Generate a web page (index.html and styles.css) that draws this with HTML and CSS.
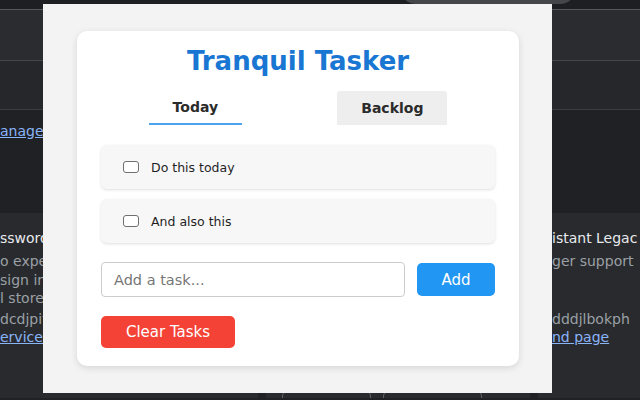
FILE: index.html
```html
<!DOCTYPE html>
<html>
<head>
<meta charset="utf-8">
<link rel="stylesheet" href="styles.css">
</head>
<body>
<div class="page">
  <div class="topstrip"><div class="search"></div></div>
  <div class="toolbar"></div>
  <div class="subbar"></div>
  <div class="notice"><a class="link">anage extensions</a></div>
  <div class="cards">
    <div class="ext">
      <div class="ext-name">ssword Manager</div>
      <div class="ext-desc">o expedite your<br>sign in across<br>l stored</div>
      <div class="ext-id">dcdjpifgh</div>
      <a class="link">ervice worker</a>
    </div>
    <div class="ext">
      <div class="ext-name">Tranquil Tasker</div>
      <div class="ext-desc">A calm task list</div>
      <div class="ext-id">ID: abcdefghijk</div>
      <a class="link">Inspect views</a>
      <div class="ext-buttons">
        <div class="ext-btn wide1"></div>
        <div class="ext-btn wide2"></div>
      </div>
    </div>
    <div class="ext">
      <div class="ext-name">istant Legac</div>
      <div class="ext-desc">ger support</div>
      <div class="ext-id">dddjlbokph</div>
      <a class="link">nd page</a>
    </div>
  </div>
</div>

<div class="popup">
  <div class="card">
    <h1 class="title">Tranquil Tasker</h1>
    <div class="tabs">
      <div class="tab active">Today</div>
      <div class="tab inactive">Backlog</div>
    </div>
    <div class="tasks">
      <div class="task"><span class="check"></span><span class="task-text">Do this today</span></div>
      <div class="task"><span class="check"></span><span class="task-text">And also this</span></div>
    </div>
    <div class="add-row">
      <div class="input"><span class="placeholder">Add a task...</span></div>
      <div class="btn add">Add</div>
    </div>
    <div class="btn clear">Clear Tasks</div>
  </div>
</div>
</body>
</html>
```
FILE: styles.css
```css
* { box-sizing: border-box; }
html, body { margin: 0; padding: 0; }
body {
  width: 640px;
  height: 400px;
  overflow: hidden;
  background: #202124;
  font-family: "DejaVu Sans", sans-serif;
  position: relative;
}
.page { width: 640px; height: 400px; overflow: hidden; }
.topstrip {
  height: 10px;
  background: #1e1f22;
  border-bottom: 1px solid #55575b;
  display: flex;
  overflow: hidden;
}
.search {
  margin-left: 400px;
  margin-top: -28px;
  width: 176px;
  height: 32px;
  border-radius: 16px;
  background: #45464a;
}
.toolbar {
  height: 51px;
  background: #2b2c30;
  border-bottom: 1px solid #45464a;
}
.subbar {
  height: 49px;
  background: #26272b;
  border-bottom: 1px solid #3c3d41;
}
.notice {
  height: 103px;
  background: #202124;
  padding-top: 12px;
}
.link {
  display: block;
  color: #8ab4f8;
  text-decoration: underline;
  font-size: 14px;
  line-height: 18px;
  white-space: nowrap;
}
.cards {
  display: grid;
  grid-template-columns: 258px 264px 1fr;
  gap: 8px;
  height: 185px;
}
.ext {
  background: #292a2d;
  padding: 15px 0 0 0;
  overflow: hidden;
  white-space: nowrap;
}
.ext:nth-child(2) { padding-left: 16px; }
.ext:nth-child(3) { padding-left: 14px; }
.ext-name {
  color: #e8eaed;
  font-size: 14px;
  line-height: 20px;
}
.ext-desc {
  color: #9aa0a6;
  font-size: 14px;
  line-height: 18.5px;
  margin-top: 4px;
  min-height: 55.5px;
}
.ext-id {
  color: #9aa0a6;
  font-size: 14px;
  line-height: 18px;
  margin-top: 2.5px;
}
.ext-buttons {
  display: flex;
  gap: 12px;
  margin-top: 45px;
}
.ext-btn {
  height: 32px;
  border: 1px solid #5f6368;
  border-radius: 5px;
}
.wide1 { width: 89px; }
.wide2 { width: 99px; }

/* popup overlay */
.popup {
  position: absolute;
  left: 43px;
  top: 4px;
  width: 509px;
  height: 389px;
  background: #f3f3f3;
  padding: 27px 33px 27px 34px;
}
.card {
  background: #ffffff;
  border-radius: 10px;
  box-shadow: 0 2px 7px rgba(0, 0, 0, 0.12);
  padding: 15px 24px 18px 24px;
}
.title {
  margin: 0;
  text-align: center;
  color: #1976d2;
  font-size: 26px;
  font-weight: bold;
  line-height: 30px;
}
.tabs {
  margin-top: 15px;
  display: flex;
  justify-content: space-around;
}
.tab {
  height: 34px;
  padding: 0 24px;
  font-size: 14px;
  font-weight: bold;
  color: #2b2b2b;
  line-height: 32px;
  border-radius: 3px 3px 0 0;
}
.tab.active {
  border-bottom: 2px solid #4aa3ec;
  border-radius: 0;
}
.tab.inactive {
  background: #eeeeee;
  line-height: 34px;
}
.tasks {
  margin-top: 20px;
  display: flex;
  flex-direction: column;
  gap: 10px;
}
.task {
  height: 44px;
  background: #f7f7f7;
  border-radius: 6px;
  box-shadow: 0 1px 3px rgba(0, 0, 0, 0.13);
  display: flex;
  align-items: center;
  padding-left: 22px;
}
.check {
  width: 16px;
  height: 12px;
  border: 1px solid #6f6f6f;
  border-radius: 3px;
  background: #ffffff;
  margin-right: 12px;
  flex: none;
}
.task-text {
  font-size: 12.5px;
  color: #1f1f1f;
}
.add-row {
  margin-top: 19px;
  display: flex;
  align-items: center;
  gap: 12px;
}
.input {
  flex: 1;
  height: 35px;
  border: 1px solid #cccccc;
  border-radius: 4px;
  background: #ffffff;
  display: flex;
  align-items: center;
  padding-left: 12px;
}
.placeholder {
  color: #767676;
  font-size: 14.5px;
}
.btn {
  color: #ffffff;
  font-size: 15px;
  border-radius: 5px;
  display: flex;
  align-items: center;
  justify-content: center;
}
.add {
  width: 78px;
  height: 33px;
  background: #2196f3;
}
.clear {
  margin-top: 19px;
  width: 134px;
  height: 32px;
  background: #f44336;
}
```
